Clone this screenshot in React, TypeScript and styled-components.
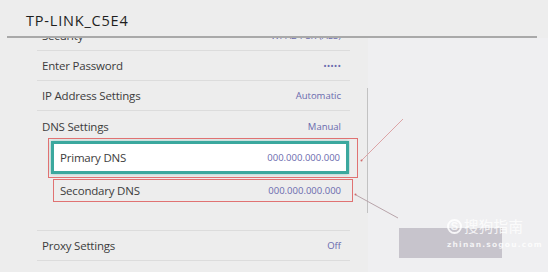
import React from 'react';
import styled, { createGlobalStyle } from 'styled-components';

const GlobalStyle = createGlobalStyle`
  html, body {
    margin: 0;
    padding: 0;
    background: #eeeeee;
  }
  body {
    font-family: 'Open Sans', 'Liberation Sans', sans-serif;
  }
`;

interface SettingItem {
  label: string;
  value: string;
}

const topRows: SettingItem[] = [
  { label: 'Security', value: 'WPA2-PSK (AES)' },
  { label: 'Enter Password', value: '•••••' },
  { label: 'IP Address Settings', value: 'Automatic' },
  { label: 'DNS Settings', value: 'Manual' },
];

const bottomRows: SettingItem[] = [
  { label: 'Proxy Settings', value: 'Off' },
  { label: 'MTU Settings', value: 'Automatic' },
];

const Page = styled.div`
  position: relative;
  width: 548px;
  height: 272px;
  overflow: hidden;
  display: flex;
  flex-direction: column;
  background: #ededed;
`;

const Header = styled.div`
  position: relative;
  z-index: 1;
  height: 38px;
  display: flex;
  flex-direction: column;
  justify-content: flex-end;
  flex-shrink: 0;
  background: #ededed;
`;

const Title = styled.div`
  padding: 0 0 8px 26px;
  font-size: 14.5px;
  line-height: 14px;
  letter-spacing: 0.8px;
  color: #1e1e1e;
`;

const HeaderRule = styled.div`
  height: 2px;
  margin: 0 11px 0 7px;
  background: #a9a9a9;
`;

const Body = styled.div`
  flex: 1;
  display: flex;
  min-height: 0;
`;

const ListViewport = styled.div`
  width: 313px;
  margin-left: 37px;
  overflow: hidden;
`;

const List = styled.div`
  margin-top: -17px;
  display: flex;
  flex-direction: column;
`;

const Row = styled.div<{ $line?: boolean }>`
  height: 30px;
  flex-shrink: 0;
  display: flex;
  align-items: center;
  justify-content: space-between;
  padding: 0 9px 0 5px;
  border-bottom: ${({ $line }) => ($line ? '1px solid #dcdcdc' : 'none')};
  box-sizing: border-box;
`;

const Label = styled.span`
  font-size: 11.5px;
  color: #3c3c3c;
  letter-spacing: -0.2px;
`;

const Value = styled.span`
  font-size: 9.5px;
  color: #6a6aae;
`;

const SubGroup = styled.div`
  display: flex;
  flex-direction: column;
  padding: 0 1px 29px 14px;
  border-bottom: 1px solid #dcdcdc;
`;

const SubRow = styled.div<{ $focused?: boolean }>`
  display: flex;
  align-items: center;
  justify-content: space-between;
  box-sizing: border-box;
  height: ${({ $focused }) => ($focused ? '33px' : '22px')};
  margin-top: ${({ $focused }) => ($focused ? '0' : '5px')};
  padding: ${({ $focused }) => ($focused ? '0 6px 0 6px' : '0 8px 0 9px')};
  background: ${({ $focused }) => ($focused ? '#ffffff' : 'transparent')};
  border: ${({ $focused }) => ($focused ? '3px solid #3ba89e' : 'none')};
  box-shadow: ${({ $focused }) => ($focused ? '0 0 3px rgba(59,168,158,0.5)' : 'none')};
`;

const ScrollTrack = styled.div`
  width: 2px;
  height: 125px;
  margin: 50px 0 0 17px;
  background: #c2c2c2;
  flex-shrink: 0;
`;

const SidePane = styled.div`
  flex: 1;
  padding: 190px 0 0 31px;
  background: #efeff1;
  margin-left: -1px;
`;

const GhostButton = styled.div`
  width: 103px;
  height: 30px;
  background: #c7c4cc;
`;

const Overlay = styled.svg`
  position: absolute;
  inset: 0;
  z-index: 2;
  pointer-events: none;
`;

const Watermark = styled.div`
  position: absolute;
  z-index: 3;
  left: 447px;
  top: 217px;
  display: flex;
  flex-direction: column;
  align-items: flex-start;
  color: rgba(255, 255, 255, 0.8);
  pointer-events: none;
`;

const MarkTop = styled.div`
  display: flex;
  align-items: center;
  gap: 2px;
`;

const MarkLogo = styled.span`
  width: 15px;
  height: 15px;
  border: 2px solid rgba(255, 255, 255, 0.85);
  border-radius: 50%;
  display: flex;
  align-items: center;
  justify-content: center;
  font: bold 11px 'Liberation Sans', sans-serif;
  box-sizing: border-box;
`;

const MarkText = styled.span`
  font-family: 'Noto Sans CJK SC', sans-serif;
  font-size: 14.5px;
  line-height: 18px;
  letter-spacing: 0.3px;
`;

const MarkUrl = styled.span`
  font: bold 7.5px 'DejaVu Sans', sans-serif;
  letter-spacing: 1.2px;
  margin-top: 5px;
`;

export default function App() {
  return (
    <>
      <GlobalStyle />
      <Page>
        <Header>
          <Title>TP-LINK_C5E4</Title>
          <HeaderRule />
        </Header>
        <Body>
          <ListViewport>
            <List>
              {topRows.map((row, i) => (
                <Row key={row.label} $line={i < topRows.length - 1}>
                  <Label>{row.label}</Label>
                  <Value>{row.value}</Value>
                </Row>
              ))}
              <SubGroup>
                <SubRow $focused>
                  <Label>Primary DNS</Label>
                  <Value>000.000.000.000</Value>
                </SubRow>
                <SubRow>
                  <Label>Secondary DNS</Label>
                  <Value>000.000.000.000</Value>
                </SubRow>
              </SubGroup>
              {bottomRows.map((row) => (
                <Row key={row.label} $line>
                  <Label>{row.label}</Label>
                  <Value>{row.value}</Value>
                </Row>
              ))}
            </List>
          </ListViewport>
          <ScrollTrack />
          <SidePane>
            <GhostButton />
          </SidePane>
        </Body>

        {/* hand-drawn annotation marks */}
        <Overlay width="548" height="272" viewBox="0 0 548 272">
          <rect x="48.5" y="138.5" width="309" height="39" fill="none" stroke="#e07272" strokeWidth="1" />
          <rect x="53.5" y="179.5" width="299" height="22" fill="none" stroke="#e07272" strokeWidth="1" />
          <line x1="403" y1="119" x2="362" y2="160" stroke="#dca4a6" strokeWidth="1" />
          <circle cx="361.5" cy="160.5" r="1" fill="#d06a6a" />
          <line x1="356" y1="195" x2="398" y2="218" stroke="#b8a4aa" strokeWidth="1" />
          <circle cx="355.5" cy="194.5" r="1" fill="#d06a6a" />
        </Overlay>

        <Watermark>
          <MarkTop>
            <MarkLogo>S</MarkLogo>
            <MarkText>搜狗指南</MarkText>
          </MarkTop>
          <MarkUrl>zhinan.sogou.com</MarkUrl>
        </Watermark>
      </Page>
    </>
  );
}
